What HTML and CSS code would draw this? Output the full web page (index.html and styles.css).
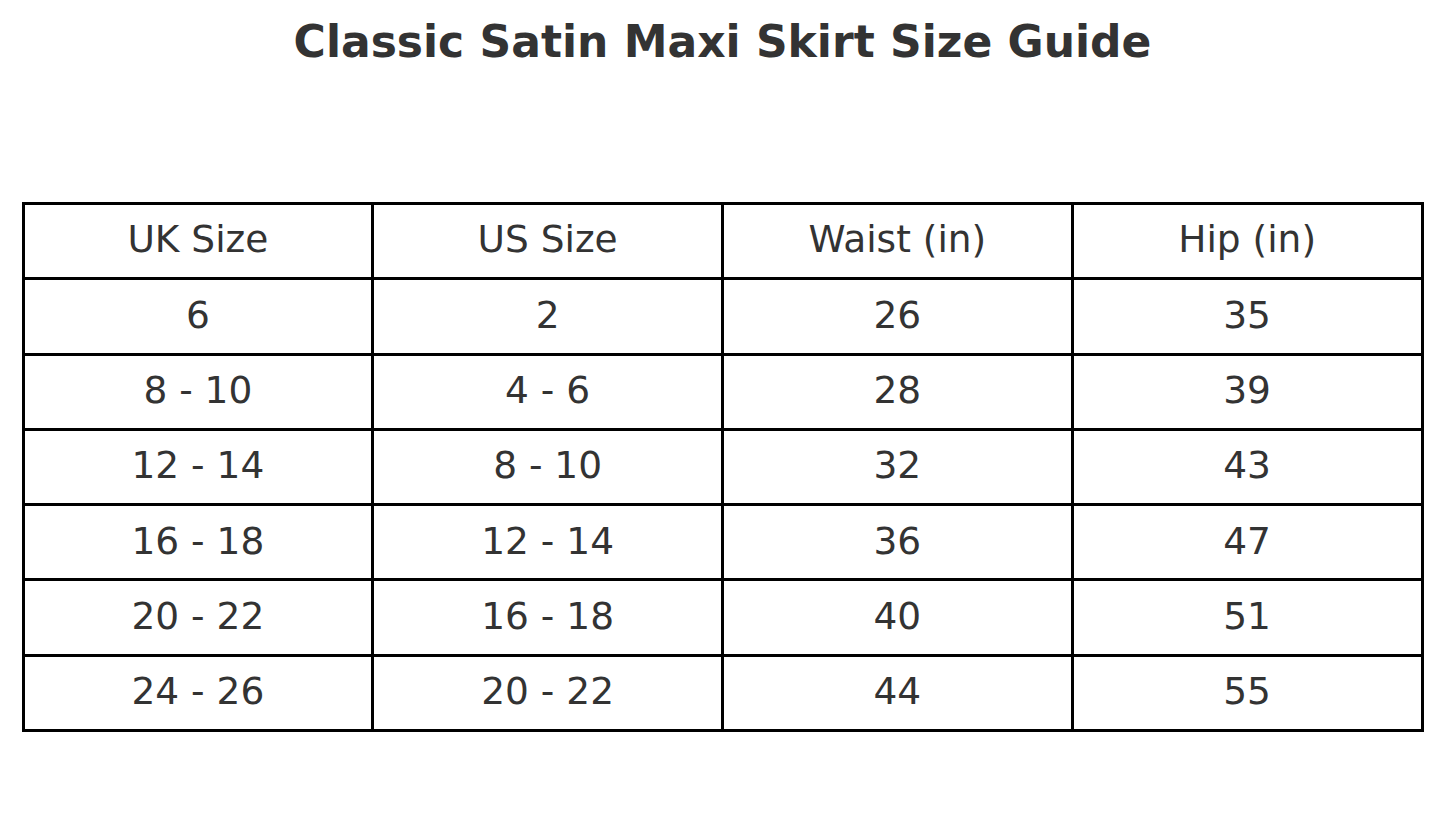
FILE: index.html
```html
<!DOCTYPE html>
<html>
<head>
<meta charset="utf-8">
<link rel="stylesheet" href="styles.css">
</head>
<body>
<div class="page">
  <h1 class="title">Classic Satin Maxi Skirt Size Guide</h1>
  <table class="guide">
    <tr><td>UK Size</td><td>US Size</td><td>Waist (in)</td><td>Hip (in)</td></tr>
    <tr><td>6</td><td>2</td><td>26</td><td>35</td></tr>
    <tr><td>8 - 10</td><td>4 - 6</td><td>28</td><td>39</td></tr>
    <tr><td>12 - 14</td><td>8 - 10</td><td>32</td><td>43</td></tr>
    <tr><td>16 - 18</td><td>12 - 14</td><td>36</td><td>47</td></tr>
    <tr><td>20 - 22</td><td>16 - 18</td><td>40</td><td>51</td></tr>
    <tr><td>24 - 26</td><td>20 - 22</td><td>44</td><td>55</td></tr>
  </table>
</div>
</body>
</html>
```
FILE: styles.css
```css
html, body {
  margin: 0;
  padding: 0;
  background: #fff;
}
.page {
  width: 1445px;
  display: flex;
  flex-direction: column;
  align-items: center;
  font-family: "DejaVu Sans", sans-serif;
  color: #333;
}
.title {
  margin: 20px 0 0 0;
  font-size: 44px;
  line-height: 44px;
  font-weight: bold;
  text-align: center;
}
.guide {
  margin-top: 138px;
  width: 1402px;
  border-collapse: collapse;
  table-layout: fixed;
}
.guide td {
  border: 3px solid #000;
  height: 70.3px;
  padding: 0 0 2px 0;
  text-align: center;
  vertical-align: middle;
  font-size: 37.5px;
  line-height: 37.5px;
}
```
